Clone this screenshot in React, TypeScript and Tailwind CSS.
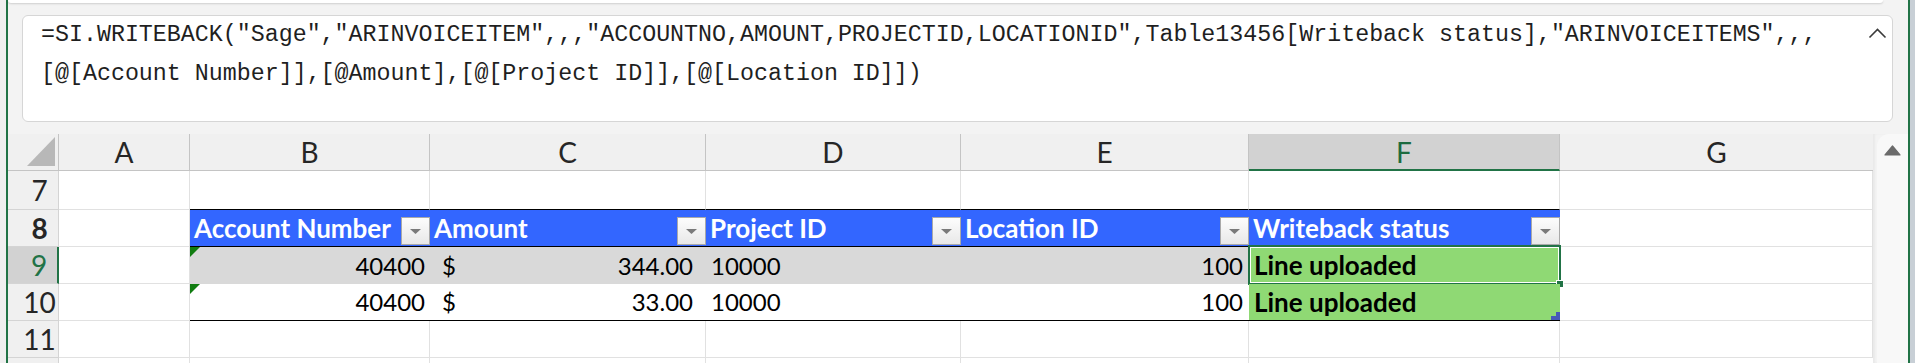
import React from "react";

const GRID = "border-r border-b border-[#e1e1e1] bg-white";
const HEADTXT = "text-[28px] text-[#262626]";

function Dropdown() {
  return (
    <div className="ml-auto mb-[1px] flex h-[28px] w-[29px] shrink-0 items-center justify-center self-end border border-[#a9a9a9] bg-linear-to-b from-[#fdfdfd] to-[#e8e8e8]">
      <svg width="11" height="5" viewBox="0 0 11 5">
        <polygon points="0,0 11,0 5.5,5" fill="#7a7a7a" />
      </svg>
    </div>
  );
}

function RowHead({ children, selected = false }: { children: React.ReactNode; selected?: boolean }) {
  return (
    <div
      className={
        selected
          ? "flex w-[51px] shrink-0 items-center justify-center border-b border-b-[#d4d4d4] border-r-2 border-r-[#217346] bg-[#d2d2d2] pl-[13px] text-[28px] text-[#217346]"
          : "flex w-[51px] shrink-0 items-center justify-center border-b border-r border-[#d4d4d4] bg-[#f0f0f0] pl-[13px] " + HEADTXT
      }
    >
      {children}
    </div>
  );
}

function TextTriangle() {
  return (
    <svg className="absolute left-0 top-0" width="10" height="10" viewBox="0 0 10 10">
      <polygon points="0,0 10,0 0,10" fill="#107c10" />
    </svg>
  );
}

export default function App() {
  return (
    <div className="flex h-[363px] w-[1915px] overflow-hidden bg-[#f3f3f3] font-['Lato',sans-serif]">
      <div className="w-[6px] shrink-0 bg-[#efefef]" />
      <div className="w-[2px] shrink-0 bg-[#217346]" />
      <div className="flex w-[1900px] shrink-0 flex-col">
        {/* ribbon edge */}
        <div className="mr-[25px] h-[3px] rounded-b-[4px] bg-white shadow-[0_1px_2px_rgba(0,0,0,0.15)]" />
        {/* formula bar */}
        <div className="ml-[14px] mr-[15px] mt-[12px] flex h-[107px] rounded-[6px] border border-[#d6d6d6] bg-white">
          <div className="flex-1 pl-[18px] font-['Liberation_Mono',monospace] text-[23.3px] leading-[38.5px] text-[#1f1f1f] whitespace-pre">
            <div>{'=SI.WRITEBACK("Sage","ARINVOICEITEM",,,"ACCOUNTNO,AMOUNT,PROJECTID,LOCATIONID",Table13456[Writeback status],"ARINVOICEITEMS",,,'}</div>
            <div>{"[@[Account Number]],[@Amount],[@[Project ID]],[@[Location ID]])"}</div>
          </div>
          <div className="mr-[5px] mt-[12px]">
            <svg width="19" height="11" viewBox="0 0 19 11">
              <polyline points="1.5,9.5 9.5,1.5 17.5,9.5" fill="none" stroke="#3a3a3a" strokeWidth="1.6" />
            </svg>
          </div>
        </div>
        {/* grid + scrollbar */}
        <div className="mt-[12px] flex flex-1">
          <div className="flex w-[1865px] shrink-0 flex-col">
            {/* column headers */}
            <div className="flex h-[37px] shrink-0">
              <div className="flex w-[51px] shrink-0 items-end justify-end border-b border-r border-[#c4c4c4] bg-[#f0f0f0] pb-[4px] pr-[3px]">
                <svg width="28" height="29" viewBox="0 0 28 29">
                  <polygon points="28,0 28,29 0,29" fill="#b8b8b8" />
                </svg>
              </div>
              <div className={"flex w-[131px] shrink-0 items-center justify-center border-b border-r border-[#c4c4c4] bg-[#f0f0f0] " + HEADTXT}>A</div>
              <div className={"flex w-[240px] shrink-0 items-center justify-center border-b border-r border-[#c4c4c4] bg-[#f0f0f0] " + HEADTXT}>B</div>
              <div className={"flex w-[276px] shrink-0 items-center justify-center border-b border-r border-[#c4c4c4] bg-[#f0f0f0] " + HEADTXT}>C</div>
              <div className={"flex w-[255px] shrink-0 items-center justify-center border-b border-r border-[#c4c4c4] bg-[#f0f0f0] " + HEADTXT}>D</div>
              <div className={"flex w-[288px] shrink-0 items-center justify-center border-b border-r border-[#c4c4c4] bg-[#f0f0f0] " + HEADTXT}>E</div>
              <div className="flex w-[311px] shrink-0 items-center justify-center border-b-2 border-r border-b-[#217346] border-r-[#c4c4c4] bg-[#d2d2d2] text-[28px] text-[#1d6b40]">F</div>
              <div className={"flex w-[313px] shrink-0 items-center justify-center border-b border-[#c4c4c4] bg-[#f0f0f0] " + HEADTXT}>G</div>
            </div>
            {/* row 7 */}
            <div className="flex h-[39px] shrink-0">
              <RowHead>7</RowHead>
              <div className={"w-[131px] shrink-0 " + GRID} />
              <div className="w-[240px] shrink-0 border-b border-r border-b-black border-r-[#e1e1e1] bg-white" />
              <div className="w-[276px] shrink-0 border-b border-r border-b-black border-r-[#e1e1e1] bg-white" />
              <div className="w-[255px] shrink-0 border-b border-r border-b-black border-r-[#e1e1e1] bg-white" />
              <div className="w-[288px] shrink-0 border-b border-r border-b-black border-r-[#e1e1e1] bg-white" />
              <div className="w-[311px] shrink-0 border-b border-r border-b-black border-r-[#e1e1e1] bg-white" />
              <div className={"w-[313px] shrink-0 " + GRID} />
            </div>
            {/* row 8 - table header */}
            <div className="flex h-[37px] shrink-0 text-[26px] font-bold text-white">
              <RowHead>8</RowHead>
              <div className={"w-[131px] shrink-0 " + GRID} />
              <div className="flex w-[240px] shrink-0 items-center border-b border-b-black bg-[#3366ff] pl-[4px]">
                <span>Account Number</span>
                <Dropdown />
              </div>
              <div className="flex w-[276px] shrink-0 items-center border-b border-b-black bg-[#3366ff] pl-[4px]">
                <span>Amount</span>
                <Dropdown />
              </div>
              <div className="flex w-[255px] shrink-0 items-center border-b border-b-black bg-[#3366ff] pl-[4px]">
                <span>Project ID</span>
                <Dropdown />
              </div>
              <div className="flex w-[288px] shrink-0 items-center border-b border-b-black bg-[#3366ff] pl-[4px]">
                <span>Location ID</span>
                <Dropdown />
              </div>
              <div className="flex w-[311px] shrink-0 items-center border-b border-b-black bg-[#3366ff] pl-[4px]">
                <span>Writeback status</span>
                <Dropdown />
              </div>
              <div className={"w-[313px] shrink-0 " + GRID} />
            </div>
            {/* row 9 */}
            <div className="flex h-[37px] shrink-0 text-[24px] text-black">
              <RowHead selected>9</RowHead>
              <div className={"w-[131px] shrink-0 " + GRID} />
              <div className="relative flex w-[240px] shrink-0 items-center justify-end bg-[#d9d9d9] pr-[5px]">
                <TextTriangle />
                40400
              </div>
              <div className="flex w-[276px] shrink-0 items-center justify-between bg-[#d9d9d9] pl-[12px] pr-[13px]">
                <span>$</span>
                <span>344.00</span>
              </div>
              <div className="flex w-[255px] shrink-0 items-center bg-[#d9d9d9] pl-[5px]">10000</div>
              <div className="flex w-[288px] shrink-0 items-center justify-end bg-[#d9d9d9] pr-[6px]">100</div>
              <div className="relative flex w-[311px] shrink-0 items-center bg-[#8fd974] pl-[5px] text-[26px] font-bold">
                Line uploaded
                <div className="pointer-events-none absolute bottom-[-1px] left-[-1px] right-[-1px] top-[-2px] border-2 border-[#217346]">
                  <div className="h-full w-full border border-white" />
                </div>
                <div className="absolute bottom-[-4px] right-[-4px] h-[8px] w-[8px] border border-white bg-[#217346]" />
              </div>
              <div className={"w-[313px] shrink-0 " + GRID} />
            </div>
            {/* row 10 */}
            <div className="flex h-[37px] shrink-0 text-[24px] text-black">
              <RowHead>10</RowHead>
              <div className={"w-[131px] shrink-0 " + GRID} />
              <div className="relative flex w-[240px] shrink-0 items-center justify-end border-b border-b-black bg-white pr-[5px]">
                <TextTriangle />
                40400
              </div>
              <div className="flex w-[276px] shrink-0 items-center justify-between border-b border-b-black bg-white pl-[12px] pr-[13px]">
                <span>$</span>
                <span>33.00</span>
              </div>
              <div className="flex w-[255px] shrink-0 items-center border-b border-b-black bg-white pl-[5px]">10000</div>
              <div className="flex w-[288px] shrink-0 items-center justify-end border-b border-b-black bg-white pr-[6px]">100</div>
              <div className="relative flex w-[311px] shrink-0 items-center border-b border-b-black bg-[#8fd974] pl-[5px] text-[26px] font-bold">
                Line uploaded
                <svg className="absolute bottom-0 right-0" width="9" height="8" viewBox="0 0 9 8">
                  <polygon points="5,0 9,0 9,8 0,8 0,4 5,4" fill="#4759b8" />
                </svg>
              </div>
              <div className={"w-[313px] shrink-0 " + GRID} />
            </div>
            {/* row 11 */}
            <div className="flex h-[37px] shrink-0">
              <RowHead>11</RowHead>
              <div className={"w-[131px] shrink-0 " + GRID} />
              <div className={"w-[240px] shrink-0 " + GRID} />
              <div className={"w-[276px] shrink-0 " + GRID} />
              <div className={"w-[255px] shrink-0 " + GRID} />
              <div className={"w-[288px] shrink-0 " + GRID} />
              <div className={"w-[311px] shrink-0 " + GRID} />
              <div className={"w-[313px] shrink-0 " + GRID} />
            </div>
            {/* row 12 partial */}
            <div className="flex flex-1">
              <div className="w-[51px] shrink-0 border-r border-[#d4d4d4] bg-[#f0f0f0]" />
              <div className="w-[131px] shrink-0 border-r border-[#e1e1e1] bg-white" />
              <div className="w-[240px] shrink-0 border-r border-[#e1e1e1] bg-white" />
              <div className="w-[276px] shrink-0 border-r border-[#e1e1e1] bg-white" />
              <div className="w-[255px] shrink-0 border-r border-[#e1e1e1] bg-white" />
              <div className="w-[288px] shrink-0 border-r border-[#e1e1e1] bg-white" />
              <div className="w-[311px] shrink-0 border-r border-[#e1e1e1] bg-white" />
              <div className="w-[313px] shrink-0 bg-white" />
            </div>
          </div>
          {/* vertical scrollbar */}
          <div className="flex w-[35px] shrink-0 bg-[#f3f3f3] shadow-[inset_2px_0_2px_rgba(0,0,0,0.04)]">
            <div className="ml-[4px] flex flex-1 justify-center rounded-tl-[12px] bg-[#f8f8f8] pt-[11px]">
              <svg width="17" height="11" viewBox="0 0 17 11">
                <path d="M8.5 1 L16 10 L1 10 Z" fill="#6b6b6b" stroke="#6b6b6b" strokeWidth="1.2" strokeLinejoin="round" />
              </svg>
            </div>
          </div>
        </div>
      </div>
      <div className="w-[2px] shrink-0 bg-[#217346]" />
      <div className="w-[5px] shrink-0 bg-[#c8cfd6]" />
    </div>
  );
}
